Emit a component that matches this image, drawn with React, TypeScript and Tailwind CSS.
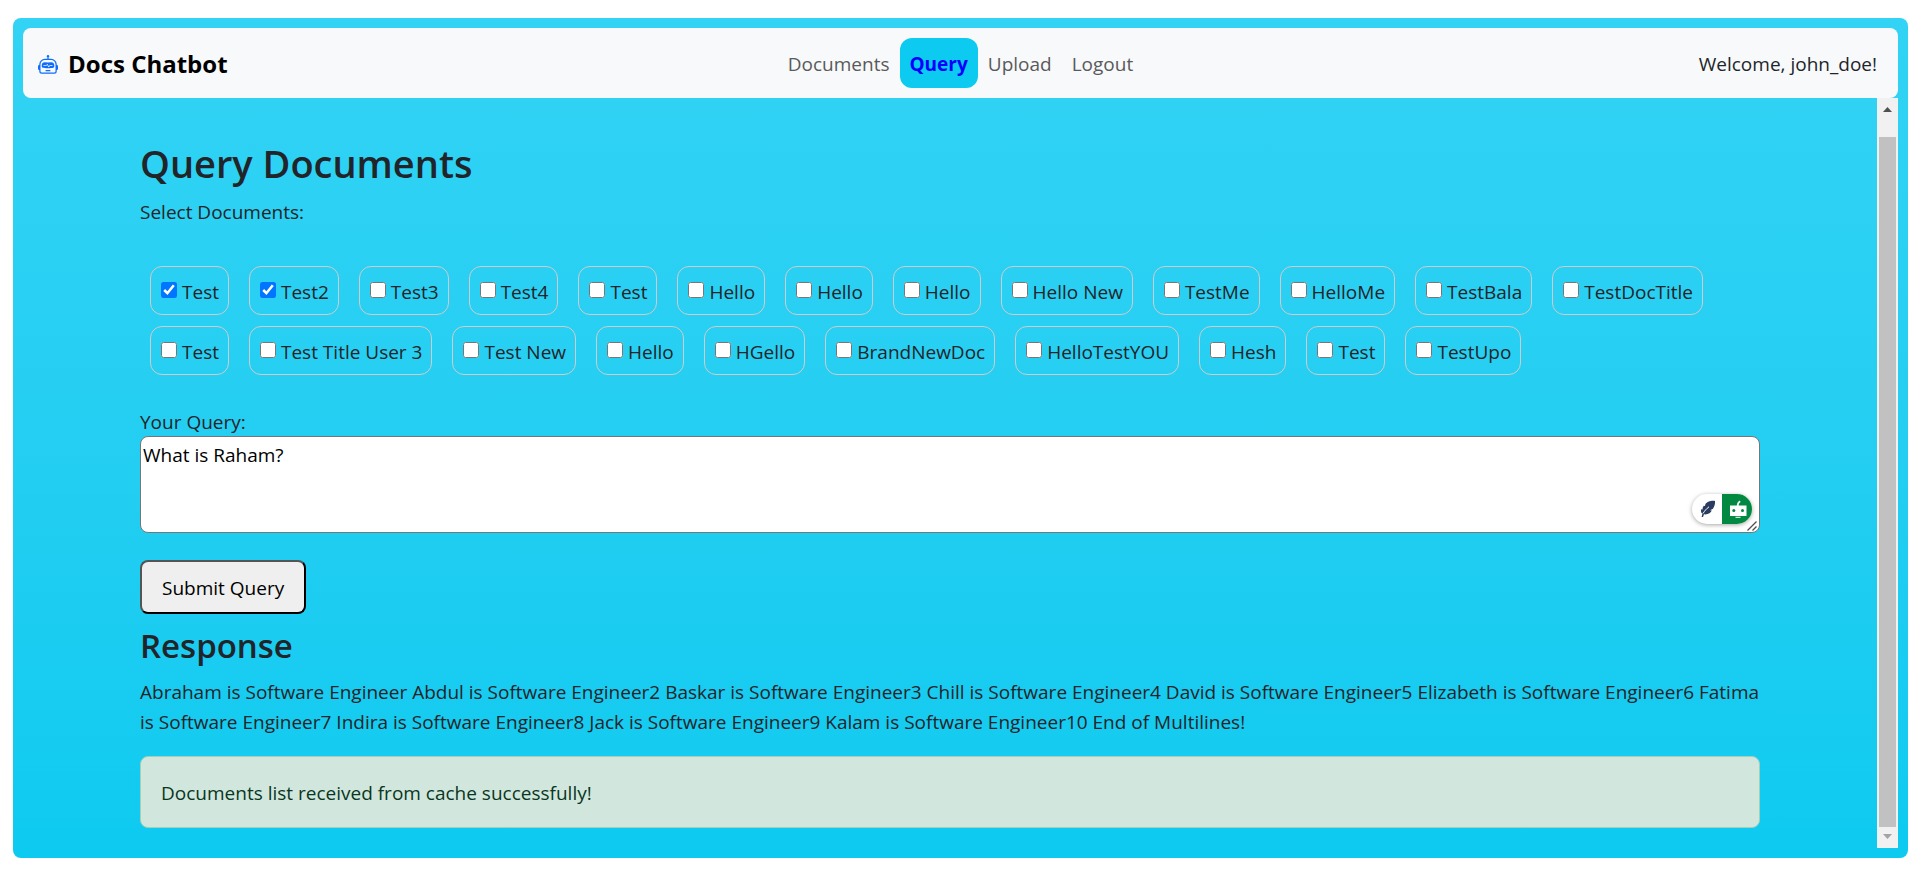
import { useState } from "react";
import { BsRobot } from "react-icons/bs";

const documents = [
  "Test", "Test2", "Test3", "Test4", "Test", "Hello", "Hello", "Hello",
  "Hello New", "TestMe", "HelloMe", "TestBala", "TestDocTitle", "Test",
  "Test Title User 3", "Test New", "Hello", "HGello", "BrandNewDoc",
  "HelloTestYOU", "Hesh", "Test", "TestUpo",
];

const navItems = ["Documents", "Query", "Upload", "Logout"];

const response =
  "Abraham is Software Engineer Abdul is Software Engineer2 Baskar is Software Engineer3 Chill is Software Engineer4 David is Software Engineer5 Elizabeth is Software Engineer6 Fatima is Software Engineer7 Indira is Software Engineer8 Jack is Software Engineer9 Kalam is Software Engineer10 End of Multilines!";

function NavBar() {
  return (
    <header className="grid h-[70px] shrink-0 grid-cols-[1fr_auto_1fr] items-center rounded-lg bg-[#f8f9fa]">
      <a href="#home" className="flex items-center gap-[10px] pt-[1px] pl-[15px] text-2xl font-bold text-black">
        <BsRobot className="mt-[2px] size-5 text-[#0d6efd]" aria-hidden="true" />
        Docs Chatbot
      </a>
      <nav className="flex">
        {navItems.map((item) => (
          <a
            key={item}
            href={`#${item.toLowerCase()}`}
            className={
              item === "Query"
                ? "rounded-xl bg-[#0dcaf0] px-[10px] pt-[11px] pb-[9px] font-bold text-[#0000ff]"
                : "px-[10px] pt-[11px] pb-[9px] text-[#595a5b]"
            }
          >
            {item}
          </a>
        ))}
      </nav>
      <span className="justify-self-end pt-[2px] pr-[21px]">Welcome, john_doe!</span>
    </header>
  );
}

function DocumentOption({ title, index }: { title: string; index: number }) {
  const [checked, setChecked] = useState(index < 2);
  const id = `doc-${index}`;
  return (
    <div className="flex h-[49px] items-center gap-[5px] rounded-xl border border-[#cccccc] pt-[2px] pr-[9px] pl-[10px]">
      <input
        id={id}
        type="checkbox"
        checked={checked}
        onChange={() => setChecked(!checked)}
        className="mb-1 size-4 accent-[#0075ff]"
      />
      <label htmlFor={id}>{title}</label>
    </div>
  );
}

function WritingWidget() {
  return (
    <div className="absolute right-2 bottom-[9px] flex h-[30px] w-[60px] overflow-hidden rounded-full bg-white shadow-[0_1px_4px_rgba(0,0,0,0.35)]">
      <button type="button" aria-label="Rephrase" className="flex flex-1 items-center justify-center">
        <svg viewBox="0 0 16 18" className="ml-[2px] h-[18px] w-4" aria-hidden="true">
          <path d="M15 1C11 .4 6.500 2 5.300 4.500L5 6 3.800 5.800C2.800 7 2.400 8.300 2.600 9.500L1.200 9.200C.8 10.800 1 12 1.600 13L2.500 13.500 1.600 17H3L4 14.300C8 14.800 10.800 13 11.800 10.500L10 10.200 13 8.700C14.500 6.500 15.300 3.500 15 1Z" fill="#2b3c61" />
          <path d="M3 13.500C4.500 11 6.500 8.700 9 6.800" fill="none" stroke="#fff" strokeWidth="1" />
        </svg>
      </button>
      <button type="button" aria-label="Assistant" className="flex flex-1 items-center justify-center bg-[#018942]">
        <svg viewBox="0 0 18 18" className="ml-[1px] size-[18px]" aria-hidden="true">
          <path d="M7.800 5.500C8 3.500 8.800 1.600 10.800.6L11.600 2C10.200 3 9.700 4 9.600 5.500H17.500V16H1V5.500Z" fill="#fff" />
          <circle cx="4.800" cy="10.500" r="1.500" fill="#018942" />
          <circle cx="13.500" cy="10.500" r="1.500" fill="#018942" />
          <path d="M6.500 17.300h5" stroke="#fff" strokeWidth="1" />
        </svg>
      </button>
    </div>
  );
}

function ResizeGrip() {
  return (
    <svg viewBox="0 0 10 10" className="pointer-events-none absolute right-[3px] bottom-[2px] size-[10px]" aria-hidden="true">
      <path d="M.5 9.500 9.500.5M5.500 9.500 9.500 5.500" fill="none" stroke="#4d4d4d" strokeWidth="1.300" />
    </svg>
  );
}

function ScrollTrack() {
  return (
    <div className="flex w-[21px] shrink-0 flex-col items-center bg-[#f1f1f1]" aria-hidden="true">
      <svg viewBox="0 0 9 5" className="mt-[9px] h-[5px] w-[9px]">
        <path d="M0 5 4.500 0 9 5Z" fill="#505050" />
      </svg>
      <div className="mt-[25px] w-[17px] flex-1 bg-[#c1c1c1]" />
      <svg viewBox="0 0 9 5" className="mt-[7px] mb-[9px] h-[5px] w-[9px]">
        <path d="M0 0H9L4.500 5Z" fill="#a3a3a3" />
      </svg>
    </div>
  );
}

export default function App() {
  return (
    <div className="flex h-screen bg-white pt-[18px] pr-3 pb-[14px] pl-[13px] font-['Open_Sans','Noto_Sans',sans-serif] text-[19px] leading-[30px] text-[#212529]">
      <div className="flex min-w-0 flex-1 flex-col rounded-lg bg-linear-to-b from-[#32d3f4] to-[#0dcaf0] p-[10px]">
        <NavBar />
        <div className="flex min-h-0 flex-1">
          <main className="min-w-0 flex-1 overflow-y-auto [scrollbar-width:none]">
            <div className="mx-auto max-w-[1650px] px-[15px] pt-[41px]">
              <h1 className="text-[38px] leading-[48px] font-semibold">Query Documents</h1>
              <p className="mt-[10px]">Select Documents:</p>
              <div className="mt-[39px] flex flex-wrap gap-x-5 gap-y-[11px] px-[10px]">
                {documents.map((title, index) => (
                  <DocumentOption key={index} title={title} index={index} />
                ))}
              </div>
              <label htmlFor="query" className="mt-[33px] block leading-[28px]">
                Your Query:
              </label>
              <div className="relative">
                <textarea
                  id="query"
                  defaultValue="What is Raham?"
                  className="block h-[97px] w-full resize-none rounded-lg border border-[#767676] bg-white px-[2px] py-[3px] text-black outline-none"
                />
                <WritingWidget />
                <ResizeGrip />
              </div>
              <button
                type="button"
                className="mt-[27px] block rounded-lg border-2 border-t-[#555] border-r-black border-b-black border-l-[#555] bg-[#efefef] px-5 pt-[11px] pb-[9px] text-black"
              >
                Submit Query
              </button>
              <h2 className="mt-[10px] text-[33px] leading-[44px] font-semibold">Response</h2>
              <p className="mt-[9px]">{response}</p>
              <div
                role="alert"
                className="mt-[19px] rounded-lg border border-[#a3cfbb] bg-[#d1e7dd] px-5 pt-[21px] pb-[19px] text-[#0a3622]"
              >
                Documents list received from cache successfully!
              </div>
            </div>
          </main>
          <ScrollTrack />
        </div>
      </div>
    </div>
  );
}
